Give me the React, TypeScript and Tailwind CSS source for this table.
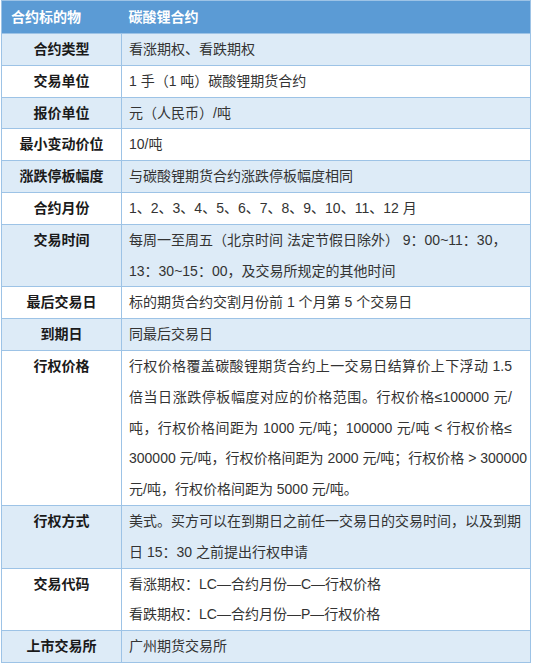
import React from "react";

type Row = { label: string; lines: string[]; justify?: number };

// justify = number of leading lines stretched to the full cell width
const rows: Row[] = [
  { label: "合约类型", lines: ["看涨期权、看跌期权"] },
  { label: "交易单位", lines: ["1 手（1 吨）碳酸锂期货合约"] },
  { label: "报价单位", lines: ["元（人民币）/吨"] },
  { label: "最小变动价位", lines: ["10/吨"] },
  { label: "涨跌停板幅度", lines: ["与碳酸锂期货合约涨跌停板幅度相同"] },
  { label: "合约月份", lines: ["1、2、3、4、5、6、7、8、9、10、11、12 月"] },
  {
    label: "交易时间",
    lines: ["每周一至周五（北京时间 法定节假日除外） 9：00~11：30，", "13：30~15：00，及交易所规定的其他时间"],
  },
  { label: "最后交易日", lines: ["标的期货合约交割月份前 1 个月第 5 个交易日"] },
  { label: "到期日", lines: ["同最后交易日"] },
  {
    label: "行权价格",
    justify: 4,
    lines: [
      "行权价格覆盖碳酸锂期货合约上一交易日结算价上下浮动 1.5",
      "倍当日涨跌停板幅度对应的价格范围。行权价格≤100000 元/",
      "吨，行权价格间距为 1000 元/吨；100000 元/吨 < 行权价格≤",
      "300000 元/吨，行权价格间距为 2000 元/吨；行权价格 > 300000",
      "元/吨，行权价格间距为 5000 元/吨。",
    ],
  },
  {
    label: "行权方式",
    justify: 1,
    lines: ["美式。买方可以在到期日之前任一交易日的交易时间，以及到期", "日 15：30 之前提出行权申请"],
  },
  { label: "交易代码", lines: ["看涨期权：LC—合约月份—C—行权价格", "看跌期权：LC—合约月份—P—行权价格"] },
  { label: "上市交易所", lines: ["广州期货交易所"] },
];

export default function App() {
  return (
    <div className="bg-white pl-px font-['Liberation_Sans','Noto_Sans_CJK_SC',sans-serif] text-[14px]">
      <table className="w-[530px] table-fixed border-collapse border border-[#9dc3e6]">
        <colgroup>
          <col className="w-[120px]" />
          <col />
        </colgroup>
        <thead>
          <tr className="bg-[#5b9bd5] text-white">
            <th className="pl-[9px] text-left font-bold leading-[32px]">合约标的物</th>
            <th className="pl-[7px] text-left font-bold leading-[32px]">碳酸锂合约</th>
          </tr>
        </thead>
        <tbody>
          {rows.map((r, i) => (
            <tr key={r.label} className={i % 2 === 0 ? "bg-[#ddebf7]" : "bg-white"}>
              <td className="border border-[#9dc3e6] p-0 text-center align-top font-bold leading-[30.8px] text-[#1a1a1a]">
                {r.label}
              </td>
              <td className="border border-[#9dc3e6] py-0 pl-[7px] pr-[18px] align-top leading-[30.8px] text-[#333]">
                {r.lines.map((l, j) => (
                  <div
                    key={j}
                    className={
                      j < (r.justify ?? 0)
                        ? "whitespace-nowrap text-justify [text-align-last:justify]"
                        : "whitespace-nowrap"
                    }
                  >
                    {l}
                  </div>
                ))}
              </td>
            </tr>
          ))}
        </tbody>
      </table>
    </div>
  );
}
